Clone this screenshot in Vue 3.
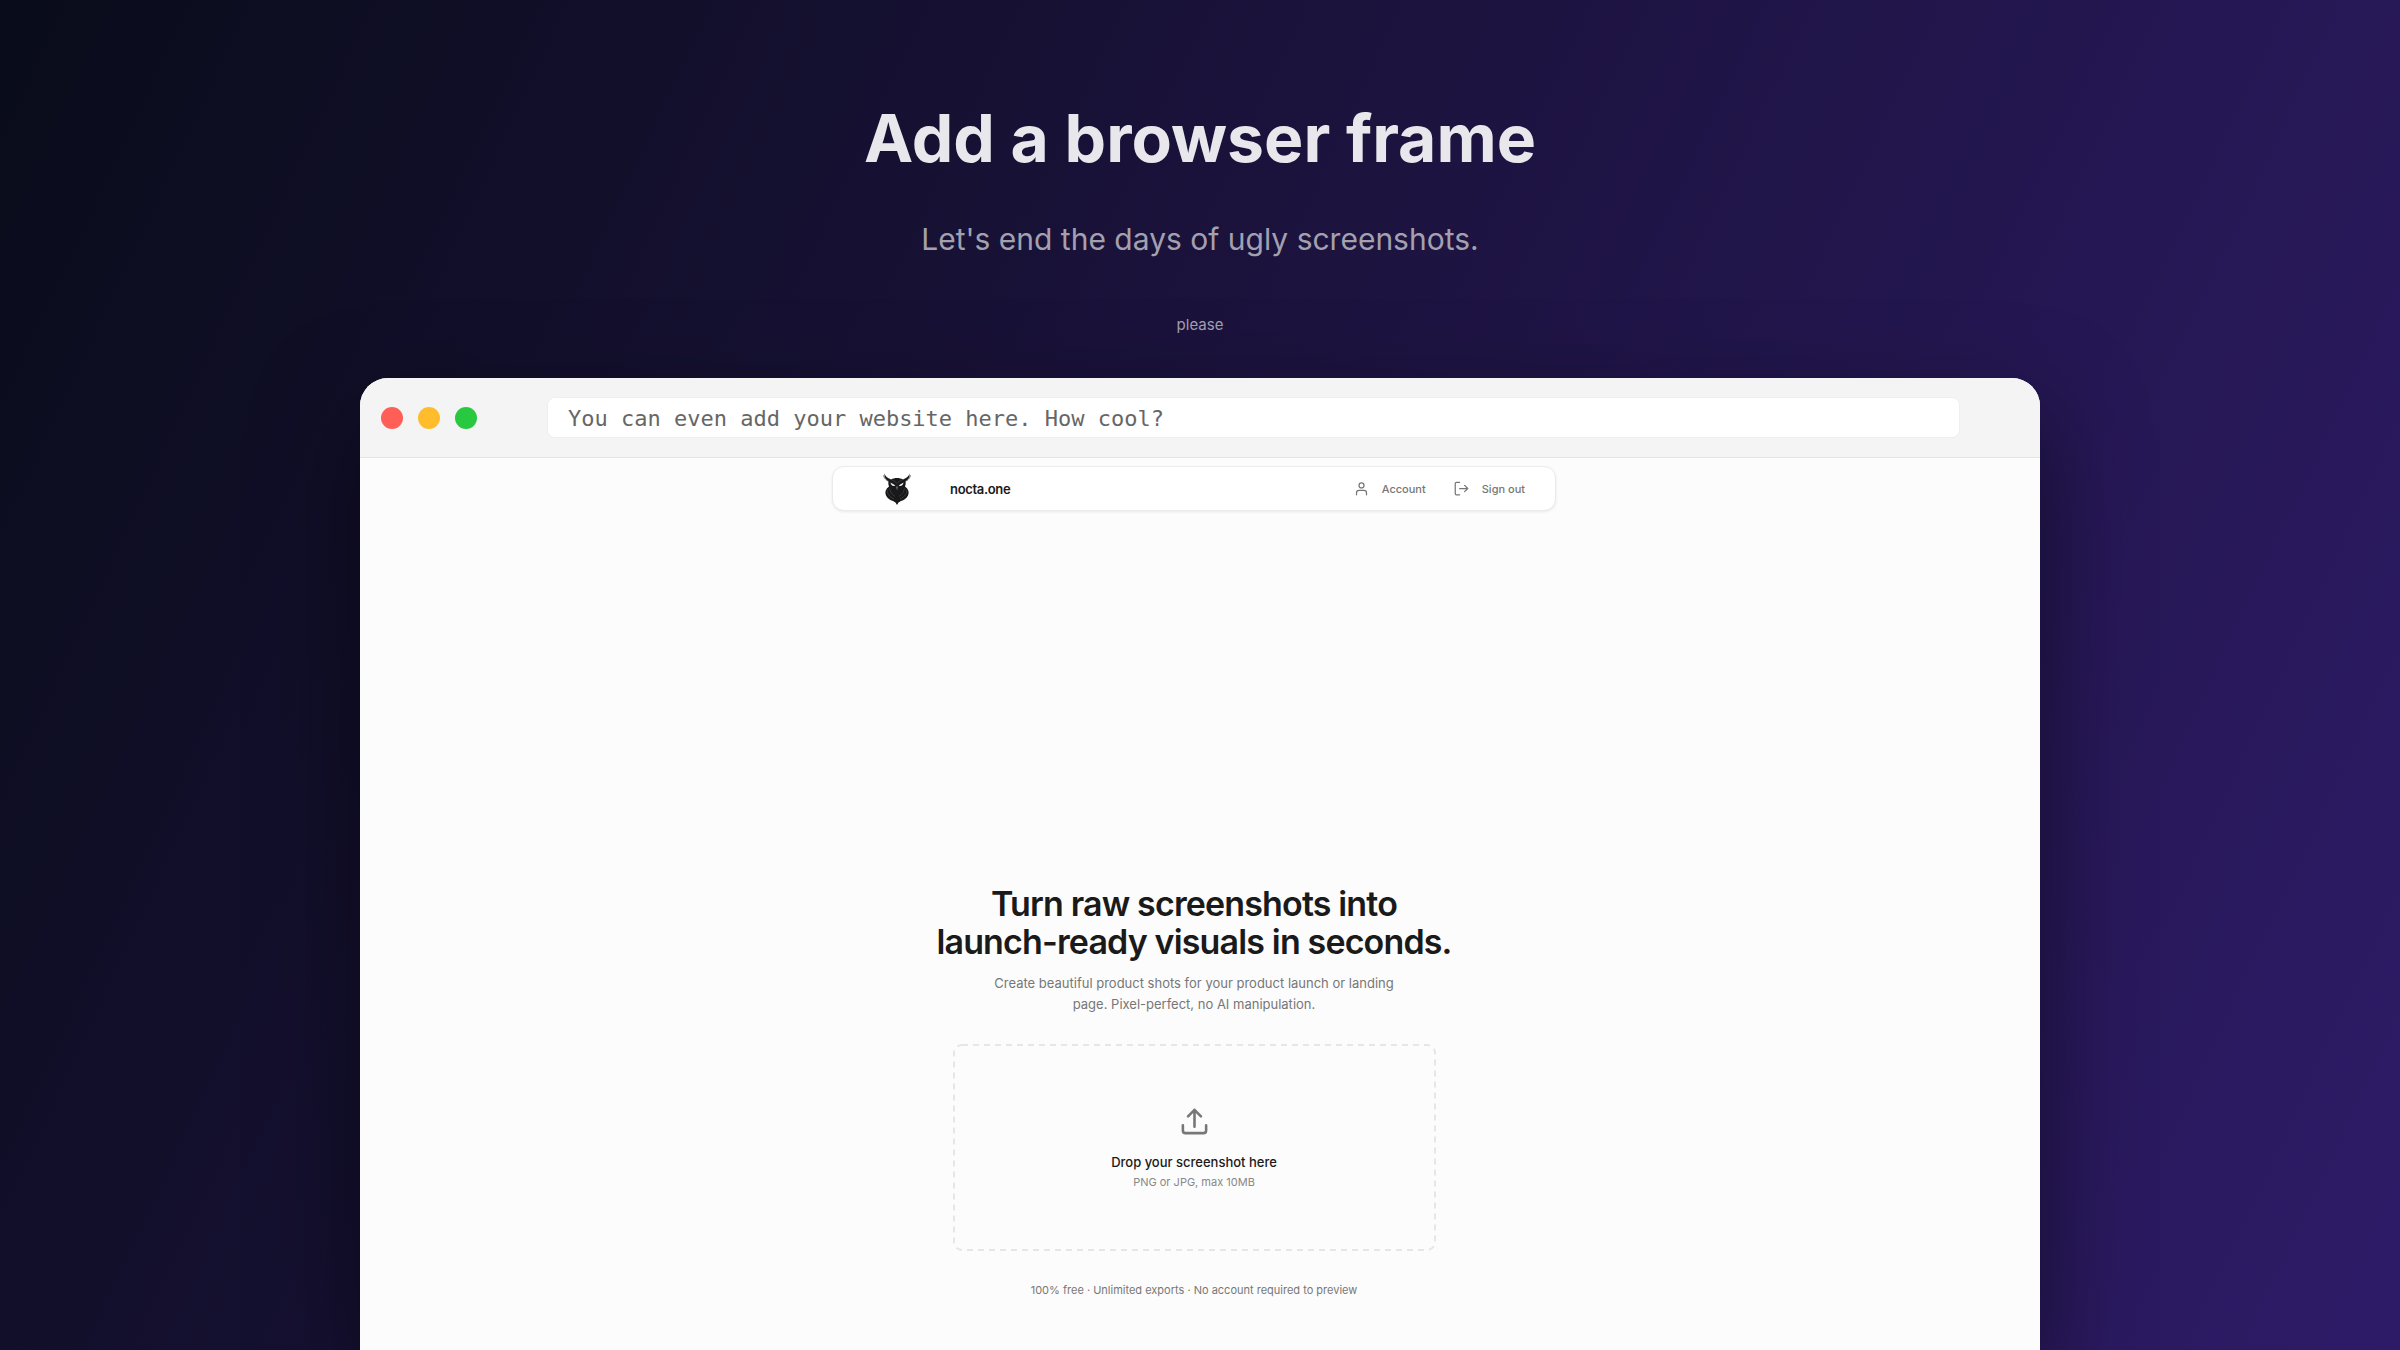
<template>
  <main class="canvas">
    <header class="intro">
      <h1>Add a browser frame</h1>
      <p class="lead">Let's end the days of ugly screenshots.</p>
      <p class="note">please</p>
    </header>

    <section class="window">
      <div class="toolbar">
        <div class="dots">
          <span class="dot red"></span>
          <span class="dot yellow"></span>
          <span class="dot green"></span>
        </div>
        <input v-model="address" class="address" type="text" aria-label="Website address" />
      </div>

      <div class="page">
        <nav class="navbar">
          <a class="brand" href="#">
            <svg class="owl" viewBox="0 0 56 64" aria-hidden="true">
              <path
                fill="#19191b"
                d="M3 1c1 5 6 9 13 12 3-2 8-3 12-3s9 1 12 3c7-3 12-7 13-12 1 7-2 12-8 16 1 4 0 7-1 10 7 5 9 11 6 18-3 6-8 9-14 11l-5 3-3 5-3-5-5-3c-6-2-11-5-14-11-3-7-1-13 6-18-1-3-2-6-1-10C5 13 2 8 3 1z"
              />
              <path fill="none" stroke="#555558" stroke-width="2" d="M1 5c2 6 5 9 11 12M55 5c-2 6-5 9-11 12" />
              <path fill="#f4f4f4" d="M15 19l10 6c-5 2-9 0-10-6zM41 19l-10 6c5 2 9 0 10-6z" />
              <path fill="#606063" d="M28 25l2 4-2 6-2-6z" />
              <g fill="none" stroke="#58585b" stroke-width="1">
                <path d="M16 13c5 2 9 4 12 8 3-4 7-6 12-8" />
                <path d="M8 33c0 8 4 14 14 19M48 33c0 8-4 14-14 19M13 31c1 6 4 11 11 16M43 31c-1 6-4 11-11 16" />
              </g>
            </svg>
            <span>nocta.one</span>
          </a>
          <div class="actions">
            <button type="button">
              <svg class="icon" viewBox="0 0 24 24" aria-hidden="true">
                <circle cx="12" cy="7" r="4" />
                <path d="M20 22v-3a4 4 0 0 0-4-4H8a4 4 0 0 0-4 4v3" />
              </svg>
              Account
            </button>
            <button type="button">
              <svg class="icon" viewBox="0 0 24 24" aria-hidden="true">
                <path d="M9 22H4a2 2 0 0 1-2-2V4a2 2 0 0 1 2-2h5M17 17l5-5-5-5M22 12H9" />
              </svg>
              Sign out
            </button>
          </div>
        </nav>

        <div class="hero">
          <h2>Turn raw screenshots into<br />launch-ready visuals in seconds.</h2>
          <p class="summary">
            Create beautiful product shots for your product launch or landing page. Pixel-perfect,
            no AI manipulation.
          </p>
          <button class="dropzone" type="button">
            <svg class="outline" aria-hidden="true">
              <rect x="1" y="1" rx="8" />
            </svg>
            <svg class="upload" viewBox="0 0 24 24" aria-hidden="true">
              <path d="M21 15v4a2 2 0 0 1-2 2H5a2 2 0 0 1-2-2v-4M17 8l-5-5-5 5M12 3v13" />
            </svg>
            <span class="drop-title">Drop your screenshot here</span>
            <span class="drop-hint">PNG or JPG, max 10MB</span>
          </button>
          <p class="perks">100% free · Unlimited exports · No account required to preview</p>
        </div>
      </div>
    </section>
  </main>
</template>

<script setup>
import { ref } from 'vue'

const address = ref('You can even add your website here. How cool?')
</script>

<style>
body {
  margin: 0;
}
</style>

<style scoped>
.canvas {
  box-sizing: border-box;
  height: 100vh;
  overflow: hidden;
  display: flex;
  flex-direction: column;
  align-items: center;
  background: linear-gradient(115deg, #090c1a 0%, #1a123a 42%, #2e1b68 100%);
  font-family: Inter, sans-serif;
}

.intro {
  padding-top: 98px;
  text-align: center;
}
.intro h1 {
  margin: 0;
  font-size: 66px;
  line-height: 80px;
  font-weight: 700;
  color: #e8e7eb;
}
.intro p {
  margin: 0;
  color: #a3a0b0;
}
.intro .lead {
  margin-top: 39px;
  font-size: 30px;
  line-height: 44px;
}
.intro .note {
  margin-top: 52px;
  font-size: 15px;
  line-height: 24px;
}

.window {
  width: 70%;
  margin-top: 41px;
  flex: 1;
  display: flex;
  flex-direction: column;
  overflow: hidden;
  border-radius: 28px 28px 0 0;
  background: #fcfcfc;
  box-shadow: 0 40px 100px rgba(0, 0, 0, 0.5);
}

.toolbar {
  box-sizing: border-box;
  height: 80px;
  padding: 0 80px 0 21px;
  display: flex;
  align-items: center;
  gap: 70px;
  background: #f4f4f4;
  border-bottom: 1px solid #e4e4e4;
}
.dots {
  display: flex;
  gap: 15px;
}
.dot {
  width: 22px;
  height: 22px;
  border-radius: 50%;
}
.red {
  background: #ff5f57;
}
.yellow {
  background: #ffbd2e;
}
.green {
  background: #28c840;
}
.address {
  box-sizing: border-box;
  flex: 1;
  height: 41px;
  padding: 2px 20px 0;
  border: 1px solid #eee;
  border-radius: 8px;
  background: #fff;
  color: #666;
  font-family: 'DejaVu Sans Mono', monospace;
  font-size: 22px;
}

.page {
  flex: 1;
  padding: 8px 12px 0 0;
  display: flex;
  flex-direction: column;
  align-items: center;
}
.navbar {
  box-sizing: border-box;
  width: 724px;
  max-width: 100%;
  height: 45px;
  padding: 0 30px 0 50px;
  display: flex;
  align-items: center;
  justify-content: space-between;
  border: 1px solid #ebebeb;
  border-radius: 12px;
  background: #fff;
  box-shadow: 0 1px 3px rgba(0, 0, 0, 0.08);
}
.brand {
  display: flex;
  align-items: center;
  gap: 39px;
  color: #1a1a1a;
  font-size: 13px;
  font-weight: 600;
  letter-spacing: -0.025em;
  text-decoration: none;
}
.owl {
  width: 28px;
  height: 32px;
}
.actions {
  display: flex;
  gap: 28px;
}
.actions button {
  padding: 0;
  display: flex;
  align-items: center;
  gap: 13px;
  border: 0;
  background: none;
  color: #777;
  font-family: inherit;
  font-size: 11px;
  font-weight: 500;
}
.icon,
.upload {
  fill: none;
  stroke: currentColor;
  stroke-width: 2;
  stroke-linecap: round;
  stroke-linejoin: round;
}
.icon {
  width: 15px;
  height: 15px;
}

.hero {
  padding-top: 374px;
  display: flex;
  flex-direction: column;
  align-items: center;
  text-align: center;
}
.hero h2 {
  margin: 0;
  color: #1a1a1a;
  font-size: 34px;
  line-height: 38px;
  font-weight: 600;
  letter-spacing: -0.025em;
}
.summary {
  width: 420px;
  margin: 12px 0 0;
  color: #777;
  font-size: 13px;
  line-height: 21px;
}
.dropzone {
  position: relative;
  width: 483px;
  height: 207px;
  margin-top: 29px;
  padding: 2px 0 0;
  display: flex;
  flex-direction: column;
  align-items: center;
  justify-content: center;
  border: 0;
  background: none;
  font-family: inherit;
}
.outline {
  position: absolute;
  inset: 0;
  width: 100%;
  height: 100%;
}
.outline rect {
  width: calc(100% - 2px);
  height: calc(100% - 2px);
  fill: none;
  stroke: #e6e6e6;
  stroke-width: 2;
  stroke-dasharray: 6 5;
}
.upload {
  width: 31px;
  height: 31px;
  color: #777;
}
.drop-title {
  margin-top: 15px;
  color: #1a1a1a;
  font-size: 13px;
  line-height: 20px;
  font-weight: 500;
}
.drop-hint {
  color: #888;
  font-size: 11px;
  line-height: 20px;
}
.perks {
  margin: 30px 0 0;
  color: #777;
  font-size: 11px;
  line-height: 18px;
}
</style>
